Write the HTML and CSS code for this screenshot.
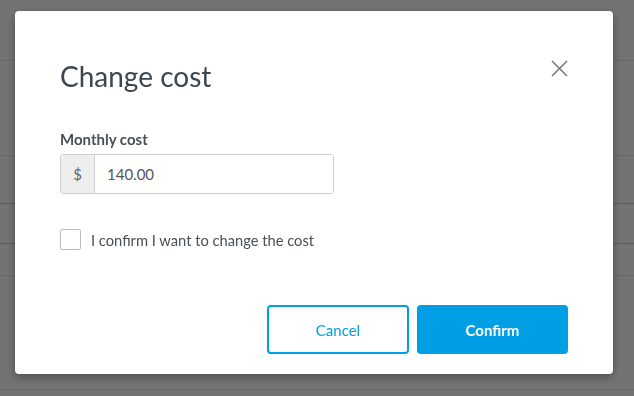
FILE: index.html
```html
<!DOCTYPE html>
<html>
<head>
<meta charset="utf-8">
<title>Change cost</title>
<link rel="stylesheet" href="styles.css">
</head>
<body>
<div class="page">
    <div class="row row-head"></div>
    <div class="row row-a"></div>
    <div class="row row-b"></div>
    <div class="row row-c"></div>
    <div class="row row-d"></div>
    <div class="row row-e"></div>
</div>
<div class="backdrop"></div>
<div class="modal">
    <div class="modal-header">
        <h1 class="modal-title">Change cost</h1>
        <button class="close" aria-label="Close">
            <svg width="17" height="17" viewBox="0 0 17 17"><path d="M1 1L16 16M16 1L1 16" stroke="#7a7a7a" stroke-width="1.6" fill="none"/></svg>
        </button>
    </div>
    <div class="modal-body">
        <label class="field-label">Monthly cost</label>
        <div class="input-group">
            <span class="addon">$</span>
            <input class="input" type="text" value="140.00">
        </div>
        <label class="check">
            <span class="check-box"></span>
            <span class="check-text">I confirm I want to change the cost</span>
        </label>
    </div>
    <div class="modal-footer">
        <button class="btn btn-outline">Cancel</button>
        <button class="btn btn-primary">Confirm</button>
    </div>
</div>
</body>
</html>
```

FILE: styles.css
```css
body {
    margin: 0;
    font-family: Lato, "Open Sans", sans-serif;
    background: #fff;
}
.page {
    height: 396px;
    overflow: hidden;
}
.row {
    border-bottom: 1px solid #e6e6e6;
}
.row-head { height: 60px; }
.row-a { height: 94px; }
.row-b { height: 47px; border-bottom-color: #c8c8c8; }
.row-c { height: 39px; border-bottom-color: #c8c8c8; }
.row-d { height: 31px; }
.row-e { height: 113px; }

.backdrop {
    position: fixed;
    inset: 0;
    background: rgba(0, 0, 0, 0.55);
}
.modal {
    position: fixed;
    left: 15px;
    top: 11px;
    width: 598px;
    height: 363px;
    box-sizing: border-box;
    background: #fff;
    border-radius: 4px;
    box-shadow: 0 3px 10px rgba(0, 0, 0, 0.35);
    padding: 0 45px 20px 45px;
    display: flex;
    flex-direction: column;
}
.modal-header {
    display: flex;
    justify-content: space-between;
    align-items: flex-start;
    padding-top: 48px;
}
.modal-title {
    margin: 0;
    font-size: 28px;
    font-weight: 400;
    line-height: 34px;
    color: #3c4650;
}
.close {
    border: 0;
    background: none;
    padding: 0;
    margin-top: 1px;
    margin-right: 0;
    width: 17px;
    height: 17px;
    display: block;
}
.modal-body {
    padding-top: 37px;
}
.field-label {
    display: block;
    font-size: 15px;
    font-weight: 700;
    color: #4a4f55;
    line-height: 18px;
    margin-bottom: 6px;
}
.input-group {
    display: flex;
    width: 274px;
    height: 40px;
    box-sizing: border-box;
    border: 1px solid #cfcfcf;
    border-radius: 3px;
    overflow: hidden;
}
.addon {
    width: 33px;
    background: #eeeeee;
    border-right: 1px solid #cfcfcf;
    display: flex;
    align-items: center;
    justify-content: center;
    color: #666;
    font-size: 15px;
}
.input {
    flex: 1;
    border: 0;
    outline: 0;
    padding: 0 12px;
    font-family: inherit;
    font-size: 15px;
    color: #555;
}
.check {
    display: flex;
    align-items: center;
    gap: 10px;
    margin-top: 35px;
}
.check-box {
    width: 19px;
    height: 19px;
    border: 1px solid #bdbdbd;
    border-radius: 2px;
}
.check-text {
    font-size: 14.7px;
    color: #4a4f55;
}
.modal-footer {
    margin-top: auto;
    display: flex;
    justify-content: flex-end;
    gap: 8px;
}
.btn {
    height: 49px;
    border-radius: 4px;
    font-family: inherit;
    font-size: 15px;
}
.btn-outline {
    width: 142px;
    background: #fff;
    border: 2px solid #009fe5;
    color: #009fe5;
}
.btn-primary {
    width: 151px;
    background: #009fe5;
    border: 0;
    color: #fff;
    font-weight: 700;
}
```
